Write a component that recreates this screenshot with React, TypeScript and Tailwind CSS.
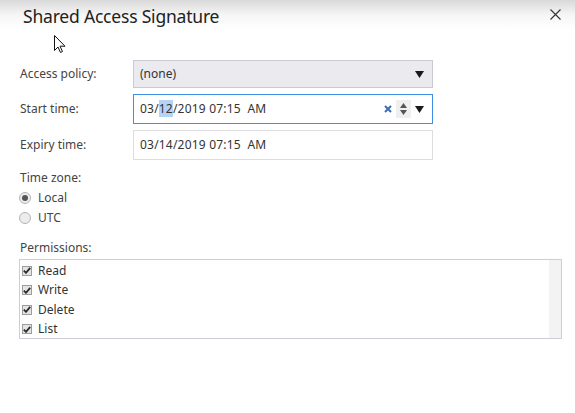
import { ReactNode } from 'react';

const Caret = () => (
  <svg width="9" height="7" viewBox="0 0 9 7">
    <path d="M0 0 H9 L4.5 7 Z" fill="#1a1a1a" />
  </svg>
);

const Radio = ({ label, checked }: { label: string; checked?: boolean }) => (
  <div className="flex items-center h-[20px]">
    <span className="w-[12px] h-[12px] ml-[19px] rounded-full border border-[#b5b5b5] bg-[#ececec] flex items-center justify-center">
      {checked && <span className="w-[6px] h-[6px] rounded-full bg-[#555]" />}
    </span>
    <span className="ml-[7px] text-[#444]">{label}</span>
  </div>
);

const Check = ({ label }: { label: string }) => (
  <div className="flex items-center h-[19.5px]">
    <span className="w-[10px] h-[10px] ml-[2px] border border-[#9d9d9d] bg-[#e4e4e4] flex items-center justify-center">
      <svg width="8" height="7" viewBox="0 0 8 7">
        <path d="M0.8 3.6 L3 5.8 L7.2 0.8" stroke="#2b2b2b" strokeWidth="1.8" fill="none" />
      </svg>
    </span>
    <span className="ml-[6px] text-[#333]">{label}</span>
  </div>
);

const Row = ({ label, children, className }: { label: string; children: ReactNode; className?: string }) => (
  <div className={'flex items-center ' + (className ?? '')}>
    <span className="w-[133px] pl-[20px] text-[#444]">{label}</span>
    {children}
  </div>
);

export default function App() {
  return (
    <div
      className="relative w-[575px] h-[413px] bg-white text-[12px] overflow-hidden"
      style={{ fontFamily: '"Noto Sans", "Open Sans", sans-serif' }}
    >
      <div className="h-[30px] flex items-start justify-between bg-gradient-to-b from-[#d9d9d9] via-[#f6f6f6] to-white">
        <h1 className="ml-[23px] mt-[3px] text-[17.5px] text-[#222] tracking-[-0.2px]">Shared Access Signature</h1>
        <svg className="mt-[9px] mr-[14px]" width="11" height="11" viewBox="0 0 11 11">
          <path d="M0.5 0.5 L10.5 10.5 M10.5 0.5 L0.5 10.5" stroke="#333" strokeWidth="1.1" />
        </svg>
      </div>

      <Row label="Access policy:" className="mt-[30px]">
        <div className="w-[300px] h-[28px] bg-[#ebeaef] border border-[#cbcad1] flex items-center justify-between pl-[6px] pr-[8px] text-[#333]">
          <span>(none)</span>
          <Caret />
        </div>
      </Row>

      <Row label="Start time:" className="mt-[6px]">
        <div className="w-[300px] h-[30px] border border-[#3f8fe4] flex items-center pl-[6px] pr-[8px] text-[#333]">
          <span className="tracking-[0.2px]">
            03/<span className="bg-[#b3d3f7]">12</span>/2019 07:15&nbsp; AM
          </span>
          <span className="ml-auto flex items-center">
            <svg width="8" height="8" viewBox="0 0 8 8">
              <path d="M1 1 L7 7 M7 1 L1 7" stroke="#3a6fb8" strokeWidth="2" />
            </svg>
            <span className="ml-[4px] w-[15px] h-[18px] bg-[#efefef] flex flex-col items-center justify-center gap-[2px]">
              <svg width="7" height="5" viewBox="0 0 7 5">
                <path d="M0 5 L3.5 0 L7 5 Z" fill="#555" />
              </svg>
              <svg width="7" height="5" viewBox="0 0 7 5">
                <path d="M0 0 H7 L3.5 5 Z" fill="#555" />
              </svg>
            </span>
            <span className="ml-[4px] flex">
              <Caret />
            </span>
          </span>
        </div>
      </Row>

      <Row label="Expiry time:" className="mt-[6px]">
        <div className="w-[300px] h-[30px] border border-[#dcdce1] flex items-center pl-[6px] text-[#333]">
          <span className="tracking-[0.2px]">03/14/2019 07:15&nbsp; AM</span>
        </div>
      </Row>

      <div className="mt-[9px] pl-[20px] text-[#444]">Time zone:</div>
      <div className="mt-[1px]">
        <Radio label="Local" checked />
        <Radio label="UTC" />
      </div>

      <div className="mt-[11px] pl-[20px] text-[#444]">Permissions:</div>
      <div className="mt-[2px] ml-[19px] w-[543px] h-[80px] border border-[#cecdd6] flex">
        <div className="flex-1 pt-[1px]">
          <Check label="Read" />
          <Check label="Write" />
          <Check label="Delete" />
          <Check label="List" />
        </div>
        <div className="w-[12px] bg-[#f3f3f3]" />
      </div>

      <svg className="absolute left-[54px] top-[35px]" width="13" height="19" viewBox="0 0 13 19">
        <path d="M0.5 0.5 V15.5 L4 12 L6.5 17.5 L8.5 16.5 L6 11.2 H11 Z" fill="#fff" stroke="#111" strokeWidth="1" />
      </svg>
    </div>
  );
}
